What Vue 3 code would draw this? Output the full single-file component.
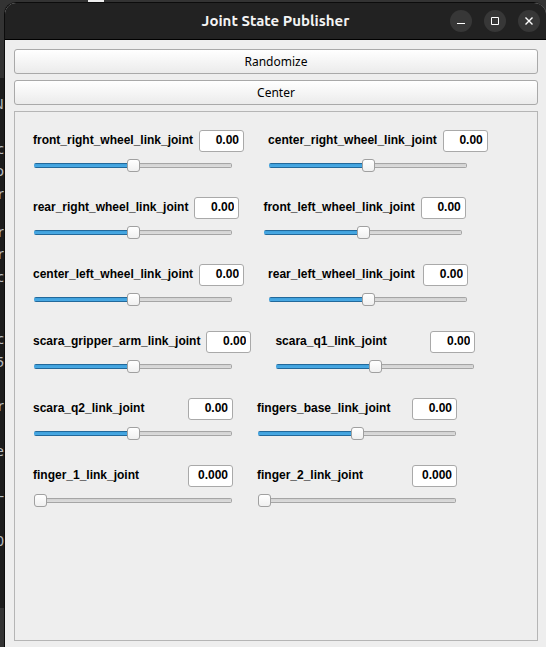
<script setup>
import { ref } from 'vue'

const make = (name, min = -3.14, max = 3.14, digits = 2) => ({
  name, min, max, digits, start: Math.max(min, 0), value: Math.max(min, 0)
})

const rows = ref([
  [make('front_right_wheel_link_joint'), make('center_right_wheel_link_joint')],
  [make('rear_right_wheel_link_joint'), make('front_left_wheel_link_joint')],
  [make('center_left_wheel_link_joint'), make('rear_left_wheel_link_joint')],
  [make('scara_gripper_arm_link_joint'), make('scara_q1_link_joint')],
  [make('scara_q2_link_joint'), make('fingers_base_link_joint')],
  [make('finger_1_link_joint', 0, 0.05, 3), make('finger_2_link_joint', 0, 0.05, 3)]
])

const terminal = [
  ['N', '', 'c', 'o', 'r'],
  ['r', 'r', 'c'],
  ['c', '5', '', 'r', '', 'e', '', '-', '', '0']
]

const percent = (j) => ((j.value - j.min) / (j.max - j.min)) * 100 + '%'

function randomize() {
  rows.value.flat().forEach((j) => {
    j.value = j.min + Math.random() * (j.max - j.min)
  })
}

function center() {
  rows.value.flat().forEach((j) => {
    j.value = j.start
  })
}
</script>

<template>
  <div class="desktop">
    <div class="terminal" aria-hidden="true">
      <div v-for="(block, b) in terminal" :key="b" class="block" :class="'block-' + b">
        <span v-for="(line, i) in block" :key="i" class="line">{{ line }}</span>
      </div>
    </div>
    <main class="window">
      <header class="titlebar">
        <h1 class="title">Joint State Publisher</h1>
        <div class="controls">
          <button class="control" type="button" aria-label="Minimize">
            <svg viewBox="0 0 22 22"><path d="M7 13.5h8" /></svg>
          </button>
          <button class="control" type="button" aria-label="Maximize">
            <svg viewBox="0 0 22 22"><path d="M7.5 7.5h7v7h-7z" /></svg>
          </button>
          <button class="control" type="button" aria-label="Close">
            <svg viewBox="0 0 22 22"><path class="cross" d="M7.5 7.5l7 7M14.5 7.5l-7 7" /></svg>
          </button>
        </div>
      </header>
      <div class="content">
        <button class="action" type="button" @click="randomize">Randomize</button>
        <button class="action" type="button" @click="center">Center</button>
        <section class="frame">
          <div v-for="(row, r) in rows" :key="r" class="row">
            <div v-for="j in row" :key="j.name" class="joint">
              <div class="head">
                <label class="name" :for="j.name">{{ j.name }}</label>
                <input class="value" type="text" readonly :aria-label="j.name + ' value'" :value="j.value.toFixed(j.digits)" />
              </div>
              <input
                :id="j.name"
                v-model.number="j.value"
                class="slider"
                type="range"
                step="any"
                :min="j.min"
                :max="j.max"
                :style="{ '--fill': percent(j) }"
              />
            </div>
          </div>
        </section>
      </div>
    </main>
  </div>
</template>

<style>
body {
  background: #333;
}
</style>

<style scoped>
.desktop {
  box-sizing: border-box;
  display: flex;
  min-height: 100vh;
  padding-top: 2px;
  background: linear-gradient(90deg, transparent 88px, #eee 88px, #eee 104px, transparent 104px) 0 0 / 100% 2px no-repeat, #333;
}

.terminal {
  box-sizing: border-box;
  flex: none;
  width: 4px;
  height: 530px;
  margin-top: 76px;
  padding-top: 14px;
  overflow: hidden;
  background: #1c1c1c;
  color: #b8bcc0;
  font: 15px "Noto Sans", sans-serif;
}

.block {
  display: flex;
  flex-direction: column;
}

.block-0 {
  height: 112px;
  margin-bottom: 16px;
}

.block-1 {
  height: 67px;
  margin-bottom: 40px;
}

.block-2 {
  height: 224px;
}

.line {
  display: flex;
  flex: 1;
  align-items: center;
  justify-content: flex-end;
  line-height: 22px;
}

.window {
  display: flex;
  flex: 1;
  flex-direction: column;
  min-width: 0;
  overflow: hidden;
  border-top: 1px solid #0c0c0c;
  border-left: 1px solid #0c0c0c;
  border-radius: 12px 12px 0 0;
  background: #eee;
}

.titlebar {
  display: grid;
  grid-template-columns: 1fr auto 1fr;
  align-items: center;
  box-sizing: border-box;
  height: 37px;
  padding: 0 6px;
  border-bottom: 1px solid #000;
  background: #222;
}

.title {
  grid-column: 2;
  margin: 0;
  color: #f4f4f4;
  font: 600 15px/20px Ubuntu, "Open Sans", sans-serif;
}

.controls {
  display: flex;
  gap: 12px;
  justify-self: end;
}

.control {
  width: 22px;
  height: 22px;
  padding: 0;
  border: 0;
  border-radius: 50%;
  background: #373737;
}

.control svg {
  display: block;
  width: 22px;
  height: 22px;
  fill: none;
  stroke: #fff;
}

.control .cross {
  stroke-width: 1.4;
}

.content {
  display: flex;
  flex: 1;
  flex-direction: column;
  gap: 6px;
  padding: 9px 8px 6px 9px;
}

.action {
  height: 25px;
  padding: 0;
  border: 1px solid #a9a9a9;
  border-radius: 3px;
  background: linear-gradient(#fff, #ebebeb);
  color: #000;
  font: 12px/20px "Noto Sans", sans-serif;
}

.frame {
  display: flex;
  flex: 1;
  flex-direction: column;
  gap: 24px;
  padding: 18px;
  border: 1px solid #b5b5b5;
}

.row {
  display: flex;
  gap: 24px;
}

.joint {
  min-width: 200px;
}

.head {
  display: flex;
  gap: 6px;
  justify-content: space-between;
}

.name {
  color: #000;
  font: 700 12px/20px "Liberation Sans", sans-serif;
}

.value {
  box-sizing: border-box;
  width: 45px;
  height: 22px;
  padding: 0 4px 2px;
  border: 1px solid #a9a9a9;
  border-radius: 3px;
  background: #fff;
  color: #000;
  font: 700 12px/18px "Liberation Sans", sans-serif;
  text-align: right;
}

.slider {
  display: block;
  width: 198px;
  height: 13px;
  margin: 7px 1px 1px;
  appearance: none;
  background: transparent;
}

.slider::-webkit-slider-runnable-track {
  height: 5px;
  border-radius: 2px;
  background:
    linear-gradient(#22699b 1px, #3ea0dc 1px, #4aaae4 4px, #22699b 4px) 0 0 / var(--fill) 100% no-repeat,
    linear-gradient(90deg, #a5a5a5 1px, transparent 1px, transparent calc(100% - 1px), #a5a5a5 calc(100% - 1px)),
    linear-gradient(#a5a5a5 1px, #d2d2d2 1px, #dcdcdc 4px, #a5a5a5 4px);
}

.slider::-webkit-slider-thumb {
  box-sizing: border-box;
  width: 13px;
  height: 13px;
  margin-top: -4px;
  appearance: none;
  border: 1px solid #a0a0a0;
  border-radius: 3px;
  background: linear-gradient(#fff, #f0f0f0);
}
</style>
